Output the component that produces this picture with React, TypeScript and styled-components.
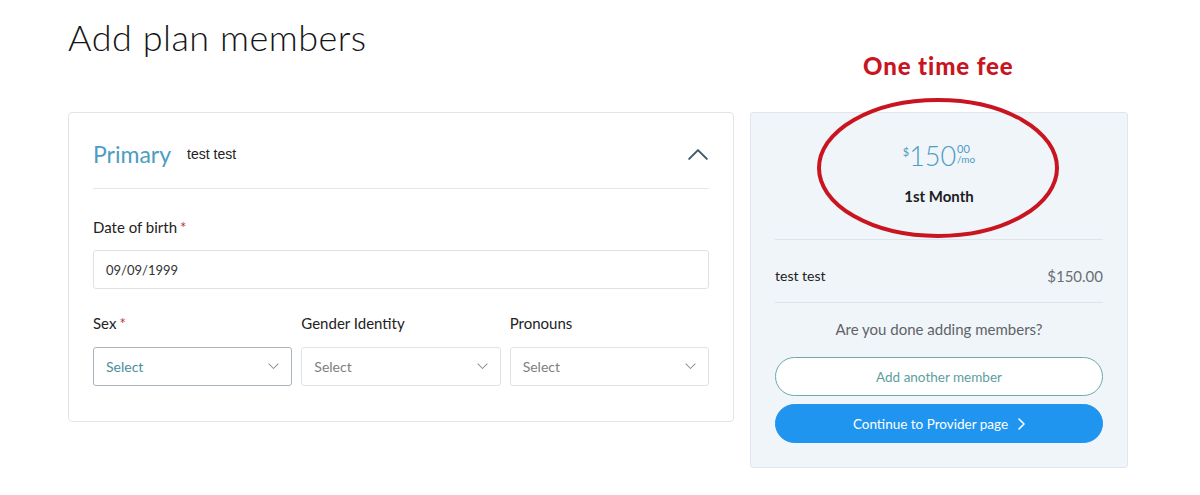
import styled, { createGlobalStyle } from "styled-components";

const GlobalStyle = createGlobalStyle`
  body {
    margin: 0;
    background: #ffffff;
    font-family: Lato, "Noto Sans", "Liberation Sans", sans-serif;
    color: #222;
  }
`;

const Page = styled.div`
  padding: 16px 0 0 68px;
`;

const Title = styled.h1`
  margin: 0 0 54px;
  font-size: 36px;
  line-height: 42px;
  font-weight: 300;
  color: #151517;
  letter-spacing: 0.5px;
`;

const Row = styled.div`
  display: flex;
  align-items: flex-start;
  gap: 16px;
`;

const Card = styled.section`
  width: 666px;
  box-sizing: border-box;
  border: 1px solid #e2e5e8;
  border-radius: 4px;
  background: #fff;
  padding: 0 24px 35px;
`;

const CardHeader = styled.div`
  display: flex;
  align-items: center;
  height: 76px;
  padding-top: 7px;
  box-sizing: border-box;
  border-bottom: 1px solid #e4e7ea;
`;

const MemberType = styled.span`
  font-size: 23px;
  font-weight: 400;
  color: #4d9cc3;
`;

const MemberName = styled.span`
  font-family: "Liberation Sans", Arial, sans-serif;
  font-size: 14px;
  color: #222;
  margin-left: 16px;
  flex: 1;
`;

const Label = styled.div<{ $top?: number }>`
  margin-top: ${({ $top }) => $top ?? 0}px;
  font-size: 15px;
  line-height: 20px;
  color: #222;
`;

const Req = styled.span`
  color: #c0303b;
  margin-left: 3px;
`;

const TextField = styled.div`
  margin-top: 13px;
  height: 39px;
  box-sizing: border-box;
  border: 1px solid #dfe2e5;
  border-radius: 3px;
  display: flex;
  align-items: center;
  padding: 0 12px;
  font-size: 13px;
  color: #333;
`;

const Grid = styled.div<{ $gap: number }>`
  display: grid;
  grid-template-columns: repeat(3, 1fr);
  column-gap: 9px;
  margin-top: ${({ $gap }) => $gap}px;
`;

const SelectBox = styled.div<{ $active?: boolean }>`
  height: 39px;
  box-sizing: border-box;
  border: 1px solid ${({ $active }) => ($active ? "#aab4bd" : "#e0e3e6")};
  border-radius: 3px;
  display: flex;
  align-items: center;
  justify-content: space-between;
  padding: 0 12px;
  font-size: 14px;
  color: ${({ $active }) => ($active ? "#4a8e9e" : "#7c7f82")};
`;

const Column = styled.div`
  position: relative;
  width: 378px;
`;

const Panel = styled.aside`
  box-sizing: border-box;
  border: 1px solid #e0e6ee;
  border-radius: 3px;
  background: #f0f5fa;
  padding: 28px 24px 24px;
`;

const Price = styled.div`
  display: flex;
  justify-content: center;
  align-items: flex-start;
  color: #4d9cc3;
  height: 30px;
`;

const Currency = styled.span`
  font-size: 11px;
  margin-top: 4px;
`;

const Amount = styled.span`
  font-size: 27px;
  line-height: 30px;
  font-weight: 300;
`;

const Cents = styled.span`
  display: flex;
  flex-direction: column;
  font-size: 11px;
  line-height: 10px;
  margin-top: 3px;
  margin-left: 1px;
`;

const Period = styled.span`
  font-size: 10px;
`;

const FirstMonth = styled.div`
  text-align: center;
  font-size: 15px;
  font-weight: 700;
  line-height: 20px;
  margin-top: 15px;
  padding-bottom: 33px;
  border-bottom: 1px solid #dde3ea;
  color: #1d1d1f;
`;

const LineItem = styled.div`
  display: flex;
  justify-content: space-between;
  font-size: 14px;
  line-height: 20px;
  padding: 26px 0 16px;
  border-bottom: 1px solid #dde3ea;
`;

const LinePrice = styled.span`
  color: #6b6e72;
  font-size: 15px;
`;

const Question = styled.div`
  text-align: center;
  font-size: 15px;
  line-height: 20px;
  color: #5f6367;
  margin: 16px 0 18px;
`;

const PillButton = styled.button<{ $primary?: boolean }>`
  display: flex;
  align-items: center;
  justify-content: center;
  gap: 10px;
  width: 100%;
  height: 39px;
  border-radius: 20px;
  font-family: inherit;
  font-size: 13.5px;
  border: 1px solid ${({ $primary }) => ($primary ? "#1f95f0" : "#6faaa8")};
  background: ${({ $primary }) => ($primary ? "#1f95f0" : "#fff")};
  color: ${({ $primary }) => ($primary ? "#fff" : "#5e9ea0")};
  margin-top: ${({ $primary }) => ($primary ? "8px" : "0")};
  padding: 0;
`;

const Note = styled.div`
  position: absolute;
  left: 113px;
  top: -61px;
  font-size: 24px;
  font-weight: 900;
  color: #c9151f;
  letter-spacing: 0.9px;
  white-space: nowrap;
`;

const Ring = styled.svg`
  position: absolute;
  left: 66px;
  top: -15px;
  pointer-events: none;
`;

const Chevron = ({ dir, size, color, width }: { dir: "up" | "down" | "right"; size: number; color: string; width: number }) => {
  const d =
    dir === "up" ? "M2 9 L10 1 L18 9" : dir === "down" ? "M1 1 L6 6 L11 1" : "M1 1 L6 6 L1 11";
  const vb = dir === "up" ? "0 0 20 10" : dir === "down" ? "0 0 12 7" : "0 0 7 12";
  const h = dir === "up" ? size / 2 : dir === "down" ? (size * 7) / 12 : (size * 12) / 7;
  return (
    <svg width={dir === "right" ? (h * 7) / 12 : size} height={h} viewBox={vb} fill="none">
      <path d={d} stroke={color} strokeWidth={width} strokeLinecap="round" strokeLinejoin="round" />
    </svg>
  );
};

const selects = [
  { label: "Sex", required: true, active: true },
  { label: "Gender Identity", required: false, active: false },
  { label: "Pronouns", required: false, active: false },
];

export default function App() {
  return (
    <>
      <GlobalStyle />
      <Page>
        <Title>Add plan members</Title>
        <Row>
          <Card>
            <CardHeader>
              <MemberType>Primary</MemberType>
              <MemberName>test test</MemberName>
              <Chevron dir="up" size={22} color="#3f5a68" width={1.8} />
            </CardHeader>
            <Label $top={28}>
              Date of birth<Req>*</Req>
            </Label>
            <TextField>09/09/1999</TextField>
            <Grid $gap={24}>
              {selects.map(({ label, required }) => (
                <Label key={label}>
                  {label}
                  {required && <Req>*</Req>}
                </Label>
              ))}
            </Grid>
            <Grid $gap={14}>
              {selects.map(({ label, active }) => (
                <SelectBox key={label} $active={active}>
                  Select
                  <Chevron dir="down" size={11} color="#8a8e92" width={1.1} />
                </SelectBox>
              ))}
            </Grid>
          </Card>
          <Column>
            <Panel>
              <Price>
                <Currency>$</Currency>
                <Amount>150</Amount>
                <Cents>
                  <span>00</span>
                  <Period>/mo</Period>
                </Cents>
              </Price>
              <FirstMonth>1st Month</FirstMonth>
              <LineItem>
                <span>test test</span>
                <LinePrice>$150.00</LinePrice>
              </LineItem>
              <Question>Are you done adding members?</Question>
              <PillButton>Add another member</PillButton>
              <PillButton $primary>
                Continue to Provider page
                <Chevron dir="right" size={7} color="#fff" width={1.6} />
              </PillButton>
            </Panel>
            <Note>One time fee</Note>
            <Ring width={244} height={142} viewBox="0 0 244 142">
              <ellipse cx={122} cy={71} rx={119} ry={68} fill="none" stroke="#c9151f" strokeWidth={4} />
            </Ring>
          </Column>
        </Row>
      </Page>
    </>
  );
}
